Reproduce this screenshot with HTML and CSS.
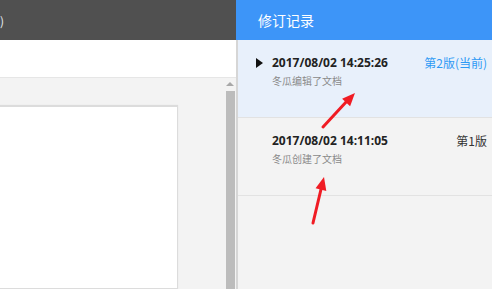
FILE: index.html
```html
<!DOCTYPE html>
<html lang="zh-CN">
<head>
    <meta charset="UTF-8">
    <title>修订记录</title>
    <link rel="stylesheet" href="styles.css">
</head>
<body>

    <div class="editor">
        <div class="toolbar"><span class="toolbar-tail">)</span></div>
        <div class="ribbon"></div>
        <div class="workspace">
            <div class="page-area">
                <div class="doc-page"></div>
            </div>
            <div class="scrollbar">
                <div class="scroll-arrow"></div>
                <div class="scroll-thumb"></div>
            </div>
        </div>
    </div>

    <div class="history-panel">
        <div class="history-title">修订记录</div>
        <div class="history-item current">
            <span class="item-marker"></span>
            <div class="item-info">
                <div class="item-time">2017/08/02 14:25:26</div>
                <div class="item-desc">冬瓜编辑了文档</div>
            </div>
            <div class="item-version">第2版(当前)</div>
        </div>
        <div class="history-item">
            <span class="item-marker"></span>
            <div class="item-info">
                <div class="item-time">2017/08/02 14:11:05</div>
                <div class="item-desc">冬瓜创建了文档</div>
            </div>
            <div class="item-version">第1版</div>
        </div>
    </div>

    <!-- annotation arrows drawn over the screenshot -->
    <svg class="annotations" width="492" height="289" viewBox="0 0 492 289">
        <line x1="323" y1="127" x2="347" y2="101" stroke="#f01c24" stroke-width="3" stroke-linecap="round"/>
        <polygon points="355,93 350.1,106.3 342.1,98.7" fill="#f01c24"/>
        <line x1="313" y1="223" x2="321.3" y2="188" stroke="#f01c24" stroke-width="3" stroke-linecap="round"/>
        <polygon points="324,177 326.3,190.9 315.6,188.3" fill="#f01c24"/>
    </svg>

</body>
</html>
```

FILE: styles.css
```css
:root {
    --dark-bar: #505050;
    --blue: #3d95f8;
    --blue-text: #2e9af5;
    --panel-bg: #f3f3f3;
    --current-bg: #e8f0fb;
    --line: #e2e2e2;
    --text-dark: #333333;
    --text-muted: #8a8a8a;
}

* {
    margin: 0;
    padding: 0;
    box-sizing: border-box;
}

body {
    display: flex;
    width: 492px;
    height: 289px;
    overflow: hidden;
    position: relative;
    font-family: "Noto Sans CJK SC", "Open Sans", sans-serif;
    color: var(--text-dark);
}

/* Left side: editor */
.editor {
    width: 236px;
    display: flex;
    flex-direction: column;
}

.toolbar {
    height: 40px;
    background-color: var(--dark-bar);
    display: flex;
    align-items: center;
}

.toolbar-tail {
    color: #e8eef5;
    font-size: 12px;
    padding-left: 0;
}

.ribbon {
    height: 38px;
    background-color: #ffffff;
    border-bottom: 1px solid #e6e6e6;
}

.workspace {
    flex: 1;
    display: flex;
    background-color: var(--panel-bg);
}

.page-area {
    flex: 1;
    padding-top: 27px;
}

.doc-page {
    width: 180px;
    height: 100%;
    margin-left: -2px;
    background-color: #ffffff;
    border: 1px solid #dcdcdc;
    border-top-width: 2px;
    box-shadow: 0 0 1px rgba(0, 0, 0, 0.08);
}

.scrollbar {
    width: 10px;
    margin-right: 1px;
    display: flex;
    flex-direction: column;
    align-items: center;
}

.scroll-arrow {
    width: 0;
    height: 0;
    margin: 4px 0 5px;
    border-left: 4px solid transparent;
    border-right: 4px solid transparent;
    border-bottom: 4px solid #a8a8a8;
}

.scroll-thumb {
    flex: 1;
    width: 9px;
    background-color: #bcbcbc;
}

/* Right side: revision history */
.history-panel {
    width: 256px;
    background-color: var(--panel-bg);
    border-left: 2px solid #d6d6d6;
}

.history-title {
    height: 40px;
    margin-left: -2px;
    padding-left: 22px;
    display: flex;
    align-items: center;
    background-color: var(--blue);
    color: #ffffff;
    font-size: 14px;
}

.history-item {
    height: 78px;
    display: flex;
    align-items: flex-start;
    padding: 12px 5px 0 18px;
    border-bottom: 1px solid var(--line);
}

.history-item.current {
    background-color: var(--current-bg);
}

.item-marker {
    width: 0;
    height: 0;
    margin-top: 6px;
    margin-right: 9px;
    border-top: 5px solid transparent;
    border-bottom: 5px solid transparent;
    border-left: 7px solid transparent;
}

.current .item-marker {
    border-left-color: #111111;
}

.item-info {
    flex: 1;
}

.item-time {
    font-family: "Open Sans", sans-serif;
    font-weight: bold;
    font-size: 12px;
    line-height: 22px;
    color: #222222;
}

.item-desc {
    font-size: 10px;
    line-height: 14px;
    color: var(--text-muted);
}

.item-version {
    font-size: 12px;
    line-height: 22px;
    color: var(--text-dark);
}

.current .item-version {
    color: var(--blue-text);
}

.annotations {
    position: absolute;
    top: 0;
    left: 0;
    pointer-events: none;
}
```
